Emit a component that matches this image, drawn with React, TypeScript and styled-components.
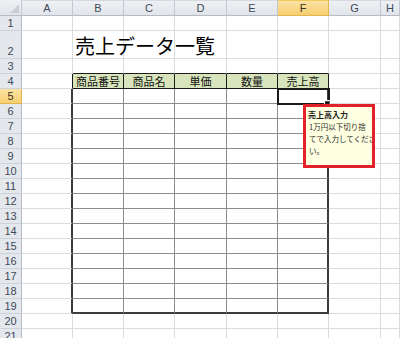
import React from 'react';
import styled, { createGlobalStyle } from 'styled-components';

const GlobalStyle = createGlobalStyle`
  html, body {
    margin: 0;
    padding: 0;
    background: #ffffff;
    overflow: hidden;
  }
`;

const GRID = '#dadcdd';
const INNER = '#8e8e8e';
const OUTER = '#3c3c3c';
const DARK = '#1a1a1a';

const Sheet = styled.div`
  position: relative;
  width: 400px;
  height: 338px;
  overflow: hidden;
  display: grid;
  grid-template-columns: 22px 51px 51px 51px 52px 51px 51px 52px 1fr;
  grid-template-rows: 16px 15px 28px repeat(19, 15px);
  font-family: "Noto Sans CJK JP", "Liberation Sans", sans-serif;
`;

const Corner = styled.div`
  position: relative;
  background: linear-gradient(#eef0f3, #e1e5ea);
  border-right: 1px solid #c3c8cf;
  border-bottom: 1px solid #b6bcc5;
  box-sizing: border-box;

  &::after {
    content: '';
    position: absolute;
    right: 2px;
    bottom: 2px;
    border-left: 9px solid transparent;
    border-bottom: 9px solid #c9ced5;
  }
`;

const ColHead = styled.div<{ $active?: boolean }>`
  box-sizing: border-box;
  display: flex;
  align-items: center;
  justify-content: center;
  font-family: "Liberation Sans", Arial, sans-serif;
  font-size: 11px;
  color: ${p => (p.$active ? '#3b3220' : '#3e4a58')};
  background: ${p =>
    p.$active ? 'linear-gradient(#fbe2a4, #f6cf6f)' : 'linear-gradient(#eef0f3, #e1e5ea)'};
  border-right: 1px solid ${p => (p.$active ? '#e2b54f' : '#c3c8cf')};
  border-bottom: 1px solid ${p => (p.$active ? '#e2b54f' : '#b6bcc5')};
  border-top: 1px solid ${p => (p.$active ? '#f0c75c' : '#d6dae0')};
`;

const RowHead = styled.div<{ $active?: boolean }>`
  box-sizing: border-box;
  display: flex;
  align-items: flex-end;
  justify-content: center;
  padding-bottom: 1px;
  font-family: "Liberation Sans", Arial, sans-serif;
  font-size: 11px;
  color: ${p => (p.$active ? '#3b3220' : '#3e4a58')};
  background: ${p => (p.$active ? 'linear-gradient(#fbe2a4, #f6cf6f)' : '#e4e8ed')};
  border-right: 1px solid ${p => (p.$active ? '#e2b54f' : '#b6bcc5')};
  border-bottom: 1px solid ${p => (p.$active ? '#e2b54f' : '#cdd2d9')};
`;

type Line = { w: number; c: string };

const Cell = styled.div<{
  $right: Line;
  $bottom: Line;
  $fill?: string;
  $selected?: boolean;
  $front?: boolean;
}>`
  position: relative;
  box-sizing: border-box;
  min-width: 0;
  background: ${p => p.$fill || '#ffffff'};
  border-right: ${p => `${p.$right.w}px solid ${p.$right.c}`};
  border-bottom: ${p => `${p.$bottom.w}px solid ${p.$bottom.c}`};
  outline: ${p => (p.$selected ? `2px solid ${DARK}` : 'none')};
  outline-offset: -1px;
  z-index: ${p => (p.$selected || p.$front ? 2 : 'auto')};
`;

const HeaderText = styled.div`
  height: 100%;
  display: flex;
  align-items: center;
  justify-content: center;
  font-size: 11px;
  color: #111;
  white-space: nowrap;
`;

const Title = styled.div`
  height: 100%;
  display: flex;
  align-items: flex-end;
  padding-left: 2px;
  font-size: 20px;
  line-height: 24px;
  color: #000;
  white-space: nowrap;
  overflow: visible;
`;

const FillHandle = styled.span`
  position: absolute;
  right: -4px;
  bottom: -4px;
  width: 5px;
  height: 5px;
  background: ${DARK};
  border: 1px solid #fff;
  z-index: 3;
`;

const Comment = styled.div`
  position: absolute;
  left: 303px;
  top: 104px;
  width: 72px;
  height: 64px;
  box-sizing: border-box;
  border: 3px solid #e3212a;
  background: #ffffe1;
  padding: 2px 0 0 2px;
  display: flex;
  flex-direction: column;
  color: #2a2a2a;
  z-index: 5;
  overflow: hidden;
`;

const CommentTitle = styled.div`
  font-size: 8px;
  line-height: 12px;
  font-weight: 700;
  color: #222;
  white-space: nowrap;
`;

const CommentLine = styled.div`
  padding-left: 1px;
  font-size: 7.5px;
  line-height: 12px;
  white-space: nowrap;
`;

const Pointer = styled.span`
  position: absolute;
  left: 325px;
  top: 101px;
  width: 4px;
  height: 4px;
  border-top: 1px solid #555;
  border-right: 1px solid #555;
  z-index: 4;
`;

const columns = ['A', 'B', 'C', 'D', 'E', 'F', 'G', 'H'];
const headers = ['商品番号', '商品名', '単価', '数量', '売上高'];
const commentLines = ['1万円以下切り捨', 'てで入力してくださ', 'い。'];

const grid: Line = { w: 1, c: GRID };

function bordersFor(row: number, col: number): { right: Line; bottom: Line; fill?: string } {
  // col: 0 = A ... 7 = H
  const inTable = col >= 1 && col <= 5;
  let right = grid;
  let bottom = grid;
  let fill: string | undefined;

  if (row === 3 && inTable) bottom = { w: 1, c: DARK };
  if (col === 0 && row === 4) right = { w: 1, c: DARK };
  if (col === 0 && row >= 5 && row <= 19) right = { w: 2, c: OUTER };

  if (row === 4 && inTable) {
    right = { w: 1, c: DARK };
    bottom = { w: 1, c: DARK };
    fill = '#d8e4bc';
  }
  if (row >= 5 && row <= 19 && inTable) {
    right = col === 5 ? { w: 2, c: OUTER } : { w: 1, c: INNER };
    bottom = row === 19 ? { w: 2, c: OUTER } : { w: 1, c: INNER };
  }
  return { right, bottom, fill };
}

const App = () => {
  const rows = Array.from({ length: 21 }, (_, i) => i + 1);

  return (
    <>
      <GlobalStyle />
      <Sheet>
        <Corner />
        {columns.map(c => (
          <ColHead key={c} $active={c === 'F'}>{c}</ColHead>
        ))}

        {rows.map(r => (
          <React.Fragment key={r}>
            <RowHead $active={r === 5}>{r}</RowHead>
            {columns.map((c, ci) => {
              const b = bordersFor(r, ci);
              const selected = r === 5 && c === 'F';
              const isTitle = r === 2 && c === 'B';
              return (
                <Cell
                  key={c}
                  $right={b.right}
                  $bottom={b.bottom}
                  $fill={b.fill}
                  $selected={selected}
                  $front={isTitle}
                >
                  {isTitle && <Title>売上データ一覧</Title>}
                  {r === 4 && ci >= 1 && ci <= 5 && <HeaderText>{headers[ci - 1]}</HeaderText>}
                  {selected && <FillHandle />}
                </Cell>
              );
            })}
          </React.Fragment>
        ))}

        <Pointer />
        <Comment>
          <CommentTitle>売上高入力</CommentTitle>
          {commentLines.map(line => (
            <CommentLine key={line}>{line}</CommentLine>
          ))}
        </Comment>
      </Sheet>
    </>
  );
};

export default App;
